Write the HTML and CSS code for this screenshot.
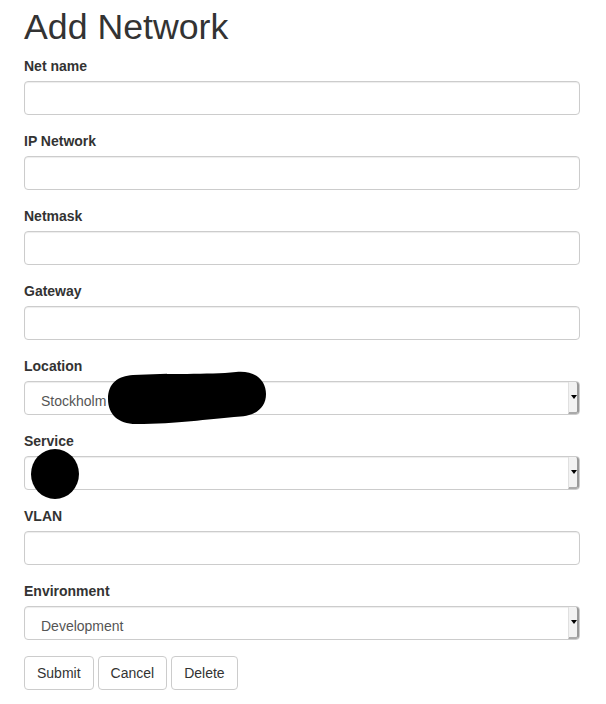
FILE: index.html
```html
<!DOCTYPE html>
<html>
<head>
<meta charset="utf-8">
<link rel="stylesheet" href="styles.css">
</head>
<body>
<div class="page">
  <h1 class="title">Add Network</h1>
  <form class="form">
    <div class="group">
      <label class="label">Net name</label>
      <input class="control" type="text">
    </div>
    <div class="group">
      <label class="label">IP Network</label>
      <input class="control" type="text">
    </div>
    <div class="group">
      <label class="label">Netmask</label>
      <input class="control" type="text">
    </div>
    <div class="group">
      <label class="label">Gateway</label>
      <input class="control" type="text">
    </div>
    <div class="group">
      <label class="label">Location</label>
      <div class="select-wrap">
        <div class="control select"><span class="select-text">Stockholm</span></div>
        <span class="arrow"></span>
        <svg class="redact redact-a" width="159" height="54" viewBox="0 0 159 54">
          <path d="M25 4 C60 2 100 4 128 1 C148 -1 158 10 158 23 C158 38 146 46 126 46 C100 48 70 53 28 53 C10 53 0 43 0 28 C0 12 10 5 25 4 Z" fill="#000"/>
        </svg>
      </div>
    </div>
    <div class="group">
      <label class="label">Service</label>
      <div class="select-wrap">
        <div class="control select"><span class="select-text"></span></div>
        <span class="arrow"></span>
        <span class="redact redact-b"></span>
      </div>
    </div>
    <div class="group">
      <label class="label">VLAN</label>
      <input class="control" type="text">
    </div>
    <div class="group">
      <label class="label">Environment</label>
      <div class="select-wrap">
        <div class="control select"><span class="select-text">Development</span></div>
        <span class="arrow"></span>
      </div>
    </div>
    <div class="actions">
      <button class="btn" type="button">Submit</button>
      <button class="btn" type="button">Cancel</button>
      <button class="btn" type="button">Delete</button>
    </div>
  </form>
</div>
</body>
</html>
```
FILE: styles.css
```css
* { box-sizing: border-box; }
html, body { margin: 0; padding: 0; background: #fff; }
body {
  font-family: "Liberation Sans", Arial, Helvetica, sans-serif;
  font-size: 14px;
  line-height: 20px;
  color: #333;
}
.page {
  padding: 8px 26px 0 24px;
}
.title {
  margin: 0 0 8px 0;
  font-size: 35.7px;
  font-weight: 500;
  line-height: 39.6px;
  color: #333;
}
.form { margin: 0; }
.group { margin-bottom: 16px; }
.label {
  display: block;
  font-weight: bold;
  margin-bottom: 5px;
}
.control {
  display: block;
  width: 100%;
  height: 34px;
  padding: 6px 12px;
  font-family: inherit;
  font-size: 14px;
  color: #555;
  background: #fff;
  border: 1px solid #ccc;
  border-radius: 4px;
  box-shadow: inset 0 1px 1px rgba(0,0,0,.075);
  outline: none;
}
.select-wrap { position: relative; }
.select {
  padding: 9px 16px 0 16px;
  line-height: 20px;
}
.select-text { color: #555; }
.arrow {
  position: absolute;
  right: 1px;
  top: 1px;
  width: 11px;
  height: 32px;
  background: #f2f2f2;
  border-left: 1px solid #e0e0e0;
  border-right: 2px solid #999;
  border-bottom: 2px solid #aaa;
  border-radius: 0 3px 3px 0;
}
.arrow::after {
  content: "";
  position: absolute;
  left: 2px;
  top: 13px;
  width: 0;
  height: 0;
  border-left: 3px solid transparent;
  border-right: 3px solid transparent;
  border-top: 4px solid #000;
}
.redact { position: absolute; }
.redact-a { left: 84px; top: -10px; }
.redact-b {
  left: 7px;
  top: -7px;
  width: 48px;
  height: 50px;
  border-radius: 50%;
  background: #000;
}
.actions {
  display: flex;
  gap: 4px;
}
.btn {
  font-family: inherit;
  font-size: 14px;
  line-height: 20px;
  color: #333;
  background: #fff;
  border: 1px solid #ccc;
  border-radius: 4px;
  padding: 6px 12px;
  height: 34px;
}
```
